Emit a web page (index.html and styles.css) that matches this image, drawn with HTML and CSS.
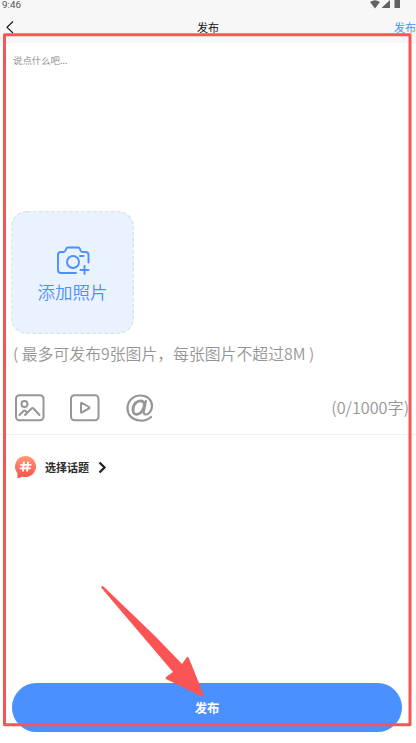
FILE: index.html
```html
<!DOCTYPE html>
<html lang="zh-CN">
<head>
<meta charset="utf-8">
<title>发布</title>
<link rel="stylesheet" href="styles.css">
</head>
<body>
<main class="screen">
  <header class="top">
    <div class="status">
      <span class="time">9:46</span>
      <svg class="signals" width="34" height="9" viewBox="0 0 34 9" fill="#626262"><path d="M0 2Q5-1.500 10 2L5 8.500zM20 0V8H11.500zM24.500 0H30V8H24.500z"/></svg>
    </div>
    <nav class="nav">
      <svg class="back" width="9" height="13" viewBox="0 0 9 13" fill="none" stroke="#111" stroke-width="1.100"><path d="M7 .5 1 6.300 7 12"/></svg>
      <h1 class="title">发布</h1>
      <span class="send">发布</span>
    </nav>
  </header>
  <section class="editor">
    <p class="placeholder">说点什么吧...</p>
    <div class="upload">
      <svg class="dash" width="123" height="123" viewBox="0 0 123 123"><rect x=".7" y=".7" width="121.600" height="121.600" rx="15" fill="#ebf2ff" stroke="#d3e7df" stroke-width="1.200" stroke-dasharray="4 2"/></svg>
      <svg class="camera" width="34" height="30" viewBox="0 0 34 30" fill="none" stroke="#4a90ff" stroke-width="1.900" stroke-linecap="round" stroke-linejoin="round"><path d="M19 27H4Q1 27 1 24V9Q1 6 4 6H6.500Q8 6 8.500 4.500L9 3Q9.600 1.500 11 1.500H21Q22.500 1.500 23 3L23.500 4.500Q24 6 25.500 6H28.500Q31.500 6 31.500 9V16.500M23 10H26.500M27.500 20V28M23.500 24H31.500"/><circle cx="16" cy="16" r="6"/></svg>
      <span class="add">添加照片</span>
    </div>
    <p class="hint">( 最多可发布9张图片，每张图片不超过8M )</p>
    <div class="tools">
      <svg width="30" height="28" viewBox="0 0 30 28" fill="none" stroke="#969696" stroke-width="2" stroke-linecap="round" stroke-linejoin="round"><rect x="1" y="1.200" width="27.500" height="25" rx="3.500"/><circle cx="9.500" cy="10" r="3"/><path d="M4.500 21 8.500 17Q9.500 16 10.500 17L12 18.500M10 21 16.500 14.500Q17.500 13.500 18.500 14.500L24.500 21"/></svg>
      <svg width="30" height="28" viewBox="0 0 30 28" fill="none" stroke="#969696" stroke-width="2" stroke-linejoin="round"><rect x="1" y="1.200" width="27.500" height="25" rx="3.500"/><path d="M11 9.500Q11 8.500 12 9L19 13Q20 13.700 19 14.400L12 18.400Q11 19 11 18z"/></svg>
      <svg width="28" height="28" viewBox="0 0 28 28" fill="none" stroke="#969696" stroke-linecap="round" stroke-linejoin="round"><path stroke-width="2.200" d="M25 23C21.500 26 17.500 27 13.500 26.500 6.500 26 1.500 21 1.500 14.500 1.500 7 7 1.500 14.500 1.500 21.500 1.500 26 6 26 12 26 17 22.500 20.500 20 20.500 17.800 20.500 17.500 19 17.900 17L19.900 7"/><path stroke-width="2.800" d="M18.600 10.500C17.500 6.800 15 6.300 12.500 7.300 9 8.700 7 12.500 7 16 7 19.800 9.500 21 12.300 20 15.600 18.800 17.700 15 18.600 10.500z"/></svg>
      <span class="count">(0/1000字)</span>
    </div>
  </section>
  <section class="topic">
    <svg width="23" height="24" viewBox="0 0 23 24"><defs><linearGradient id="warm" x1="0" y1="0" x2="0" y2="1"><stop stop-color="#ff9a78"/><stop offset="1" stop-color="#ff4f46"/></linearGradient></defs><path fill="url(#warm)" d="M11.500 1A10.500 10.500 0 1 1 8 21.400Q6 23 3.200 23 3.800 21 3.300 18A10.500 10.500 0 0 1 11.500 1z"/><path d="M9.900 7.500 9 15.700M14 7.500 13.100 15.700M7 9.900H16.500M6.500 13.400H16" fill="none" stroke="#fff" stroke-width="1.900" stroke-linecap="round"/></svg>
    <span class="topic-name">选择话题</span>
    <svg class="chevron" width="10" height="13" viewBox="0 0 10 13" fill="none" stroke="#222" stroke-width="2.300"><path d="M1.500 1.500 6.500 6.500 1.500 11.500"/></svg>
  </section>
  <button class="publish">发布</button>
  <svg class="markup" width="416" height="743" viewBox="0 0 416 743"><path d="M4.500 34.800H410V724.800H4.500z" fill="none" stroke="#fb5454" stroke-width="3" stroke-linejoin="round"/><path d="M101.500 586Q102.500 585.500 104 587L155 636 182 664 187 657Q188 656 189 658.500L203.800 695Q204 697 202 696.800L166 679Q165 678 166 677L173 672 101.500 588z" fill="#fb5454"/></svg>
</main>
</body>
</html>
```
FILE: styles.css
```css
* { box-sizing: border-box; }
body { margin: 0; background: #fff; font-family: "Noto Sans CJK SC", sans-serif; }
h1, p { margin: 0; font-weight: 400; }
svg { display: block; flex: none; }
.screen { position: relative; width: 416px; height: 743px; overflow: hidden; display: flex; flex-direction: column; }
.top { height: 43px; background: #f7f7f7; flex: none; }
.status { height: 14px; display: flex; justify-content: space-between; padding: 0 12px 0 2px; }
.time { font: 9.800px/10px Roboto, sans-serif; color: #555; }
.signals { width: 34px; }
.nav { height: 25px; display: grid; grid-template-columns: 1fr auto 1fr; align-items: center; }
.back { margin: 2px 0 0 6px; }
.title { font-size: 11px; line-height: 16px; color: #111; }
.send { justify-self: end; font-size: 11px; line-height: 16px; color: #4a90ff; }
.editor { height: 392px; flex: none; border-bottom: 1px solid #f0f0f0; padding: 9px 7px 0 11px; }
.placeholder { height: 159px; padding-left: 2px; font-size: 9.400px; line-height: 16px; color: #858585; font-weight: 350; }
.upload { position: relative; width: 123px; height: 123px; display: flex; flex-direction: column; align-items: center; padding-top: 35px; }
.dash { position: absolute; inset: 0; }
.camera, .add { position: relative; }
.camera { left: 1px; }
.add { margin-top: 3px; font-size: 17.500px; line-height: 26px; color: #4a90ff; font-weight: 350; }
.hint { margin: 8px 0 0 2px; font-size: 15.850px; line-height: 24px; color: #969696; white-space: nowrap; font-weight: 350; }
.tools { display: flex; align-items: center; gap: 25.500px; margin: 28px 0 0 3.500px; }
.count { margin: -3px 0 0 auto; font-size: 16.200px; line-height: 24px; color: #969696; font-weight: 350; }
.topic { height: 64px; display: flex; align-items: center; padding-left: 14px; }
.topic-name { margin-left: 8px; font-size: 11px; line-height: 16px; font-weight: 700; color: #2c2c2c; }
.chevron { margin-left: 9px; }
.publish { width: 390px; height: 49px; margin: auto 0 11px 12px; border: 0; border-radius: 25px; background: #4a90ff; color: #fff; font: 700 12.300px/18px "Noto Sans CJK SC", sans-serif; }
.markup { position: absolute; inset: 0; pointer-events: none; }
```
